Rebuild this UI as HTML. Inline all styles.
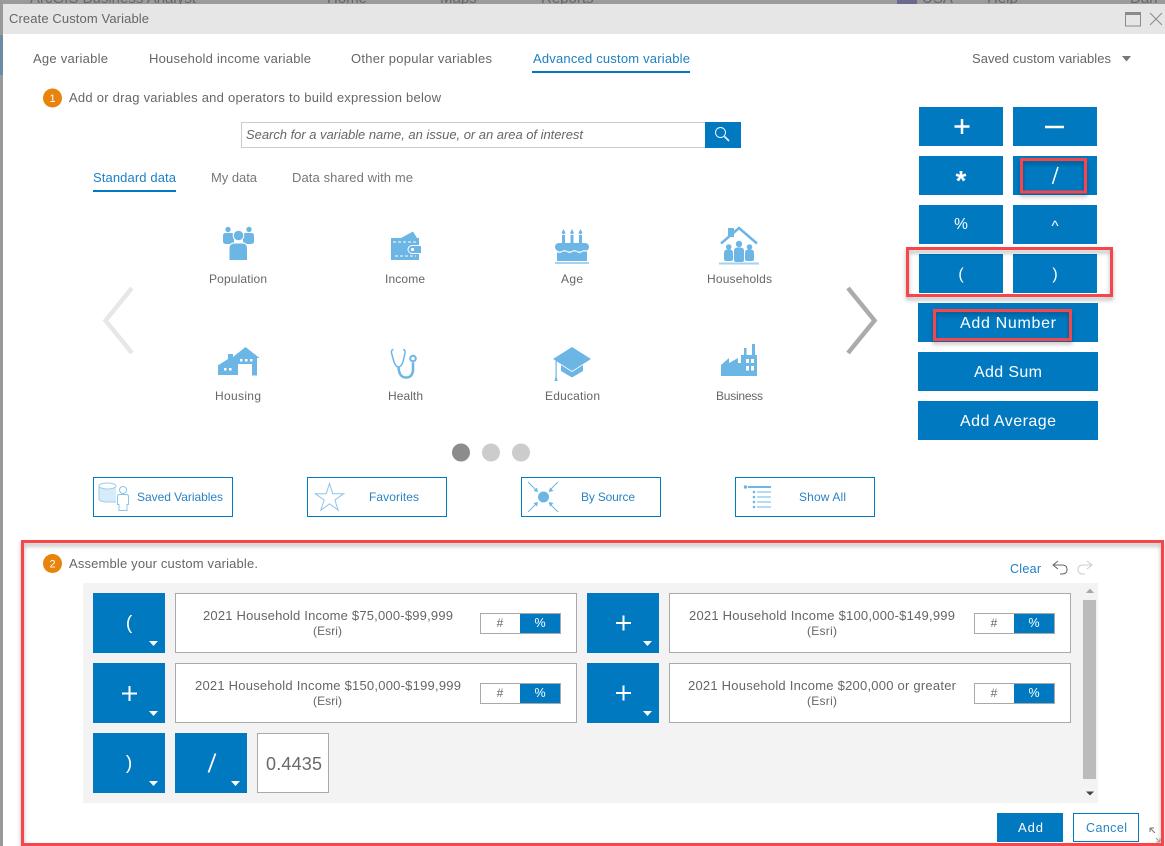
<!DOCTYPE html>
<html lang="en"><head><meta charset="utf-8"><title>Create Custom Variable</title>
<style>
html,body{margin:0;padding:0;width:1165px;height:846px;overflow:hidden;background:#fff}
svg{display:block;position:absolute;left:0;top:0}
text{font-family:"Liberation Sans",sans-serif;font-size:13px;fill:#666}
.b{fill:#0079c1}
.c{text-anchor:middle}
.lb{fill:#6cb6e6}
.red{fill:none;stroke:#f6444c;stroke-width:3}
.v{fill:#fff;stroke:#a9a9a9;stroke-width:1}
</style></head><body>
<svg width="1165" height="846" viewBox="0 0 1165 846" xmlns="http://www.w3.org/2000/svg">
<defs>
<filter id="sh" x="-10%" y="-20%" width="120%" height="150%"><feDropShadow dx="0" dy="3" stdDeviation="2" flood-color="#000" flood-opacity=".3"/></filter>
<g id="tri"><path d="M0 0h9l-4.500 5z" fill="#fff"/></g>
</defs>
<!-- backdrop strip -->
<rect width="1165" height="4" fill="#9b9b9b"/>
<rect y="0" width="3" height="846" fill="#999"/>
<rect y="35" width="3" height="40" fill="#6d8ba3"/>
<text x="30" y="3" style="font-size:15px;fill:#666">ArcGIS Business Analyst</text>
<text x="327" y="3" style="font-size:15px;fill:#666">Home</text>
<text x="440" y="3" style="font-size:15px;fill:#666">Maps</text>
<text x="541" y="3" style="font-size:15px;fill:#666">Reports</text>
<rect x="897" y="0" width="20" height="4" fill="#6c6a8c"/>
<text x="922" y="3" style="font-size:15px;fill:#666">USA</text>
<text x="987" y="3" style="font-size:15px;fill:#666">Help</text>
<text x="1130" y="3" style="font-size:15px;fill:#666">Dan</text>
<!-- title bar -->
<rect x="3" y="4" width="1162" height="30" fill="#e6e6e6"/>
<text x="9" y="23" textLength="140">Create Custom Variable</text>
<rect x="1125.500" y="12.500" width="15" height="13.500" fill="none" stroke="#8a8a8a"/>
<rect x="1125.500" y="12.500" width="15" height="2.500" fill="#8a8a8a"/>
<path d="M1150 13l12 12M1162 13l-12 12" stroke="#8a8a8a" fill="none"/>
<!-- tabs -->
<text x="33" y="63" textLength="75">Age variable</text>
<text x="149" y="63" textLength="162">Household income variable</text>
<text x="351" y="63" textLength="141">Other popular variables</text>
<text x="533" y="63" textLength="157" style="fill:#1c80c4">Advanced custom variable</text>
<rect x="532" y="71" width="158" height="2" class="b"/>
<text x="972" y="63" textLength="139">Saved custom variables</text>
<path d="M1122 56h9l-4.500 5.500z" fill="#777"/>
<!-- step 1 -->
<circle cx="52.500" cy="98" r="9.500" fill="#e8830c"/>
<text x="52.500" y="102" class="c" style="font-size:11px;fill:#fff">1</text>
<text x="69" y="102" textLength="372">Add or drag variables and operators to build expression below</text>
<!-- search -->
<rect x="241.500" y="122.500" width="464" height="25" fill="#fff" stroke="#ccc"/>
<text x="246" y="139" textLength="337" style="font-style:italic">Search for a variable name, an issue, or an area of interest</text>
<rect x="705" y="122" width="36" height="26" class="b"/>
<circle cx="720.500" cy="132.500" r="5" fill="none" stroke="#fff" stroke-width=".9"/>
<path d="M724.500 136.500l4.500 4.500" stroke="#dfeef8" stroke-width="1.800"/>
<!-- sub tabs -->
<text x="93" y="182" textLength="83" style="fill:#1c80c4">Standard data</text>
<rect x="93" y="190" width="83" height="2" class="b"/>
<text x="211" y="182" textLength="46" style="fill:#777">My data</text>
<text x="292" y="182" textLength="121" style="fill:#777">Data shared with me</text>
<!-- category icons -->
<g class="lb">
<!-- population -->
<circle cx="228" cy="229.500" r="2.700"/><circle cx="249" cy="229.500" r="2.700"/>
<rect x="223" y="233" width="11" height="11" rx="2.500"/><rect x="243" y="233" width="11" height="11" rx="2.500"/>
<circle cx="238.500" cy="235.500" r="5.300" stroke="#fff" stroke-width="1"/>
<path d="M229 260.500v-12q0-5.500 5.500-5.500h8q5 0 5 5.500v12z" stroke="#fff" stroke-width="1"/>
<!-- income -->
<path d="M401 238l12-6.500 4 6.500z"/>
<path d="M391 238h28v7h-7a4.500 4.500 0 0 0 0 9h7v6h-28z"/>
<path d="M412 246h9v7h-9a3.500 3.500 0 0 1 0-7z"/>
<circle cx="412.500" cy="249.500" r="1.600" fill="#fff"/>
<path d="M393 242h24M395 256h21" stroke="#fff" stroke-width="1" stroke-dasharray="3 2"/>
<!-- housing -->
<path d="M217 366l11-7v-5h5v3l12.500-10 14 11h-2.500v17.500h-5V364h-14v11h-20v-9h-1z"/>
<g fill="#fff"><rect x="240" y="359" width="2.500" height="2.500"/><rect x="245" y="359" width="2.500" height="2.500"/><rect x="250" y="359" width="2.500" height="2.500"/><rect x="224" y="368" width="2.500" height="2.500"/><rect x="229" y="368" width="2.500" height="2.500"/></g>
<!-- age -->
<rect x="555" y="243" width="34" height="8" rx="4"/>
<path d="M557 251.500h30V261h-30z"/>
<path d="M557 251.500q2.500 2.500 5 0t5 0 5 0 5 0 5 0 5 0" fill="none" stroke="#fff" stroke-width=".8"/>
<rect x="555" y="262" width="34" height="2" fill="#a5d2f0"/>
<rect x="562" y="235" width="3" height="8"/><rect x="570.500" y="235" width="3" height="8"/><rect x="579" y="235" width="3" height="8"/>
<path d="M563.500 229l2 4-2 1.500-2-1.500zM572 229l2 4-2 1.500-2-1.500zM580.500 229l2 4-2 1.500-2-1.500z"/>
<!-- households -->
<rect x="728" y="228" width="6" height="9"/>
<path d="M721 243.500l18-15.500 18 15.500" fill="none" stroke="#6cb6e6" stroke-width="2.500"/>
<circle cx="739" cy="244" r="3.200"/><circle cx="728.700" cy="247" r="2.800"/><circle cx="749.500" cy="247" r="2.800"/>
<path d="M724 259v-6q0-3.500 3.500-3.500h2q3.500 0 3.500 3.500v6q0 2-2 2h-5q-2 0-2-2zM745 259v-6q0-3.500 3.500-3.500h2q3.500 0 3.500 3.500v6q0 2-2 2h-5q-2 0-2-2z"/>
<path d="M734 260v-9q0-3.500 3.500-3.500h3q3.500 0 3.500 3.500v9q0 2-2 2h-6q-2 0-2-2z"/>
<rect x="719" y="262.500" width="40" height="2" fill="#a5d2f0"/>
<!-- education -->
<path d="M572 347l19 12-19 12-19-12z"/>
<path d="M561 365v6l11 6.500 11-6.500v-6l-11 7z"/>
<rect x="555.500" y="361" width="1.200" height="17"/><path d="M555.500 377h1.200l1 4h-3.200z"/>
<!-- business -->
<path d="M721 376v-11l8-7v5l9-5v5h3v-8h3v-7h2.500v7h5.500v-11h3v11h2v21z"/>
<g fill="#fff"><rect x="746" y="359" width="3" height="4"/><rect x="751" y="359" width="3" height="4"/><rect x="746" y="366" width="3" height="4.500"/><rect x="751" y="366" width="3" height="4.500"/></g>
</g>
<!-- health -->
<g fill="none" stroke="#6cb6e6">
<path d="M393.500 349.500q-2.500 0-2 3.500l2.500 9q2 5 4.500 5t4.500-5l2-9q.5-3.500-2-3.500" stroke-width="1.500"/>
<path d="M398.500 367q.5 10 7 10.500t7.500-7v-8" stroke-width="2.500"/>
<circle cx="413" cy="358.500" r="2.800" stroke-width="2"/>
</g>
<text x="209" y="283" textLength="58" style="font-size:12px">Population</text>
<text x="385" y="283" textLength="40" style="font-size:12px">Income</text>
<text x="561" y="283" textLength="22" style="font-size:12px">Age</text>
<text x="707" y="283" textLength="65" style="font-size:12px">Households</text>
<text x="215" y="400" textLength="46" style="font-size:12px">Housing</text>
<text x="388" y="400" textLength="35" style="font-size:12px">Health</text>
<text x="545" y="400" textLength="55" style="font-size:12px">Education</text>
<text x="716" y="400" textLength="47" style="font-size:12px">Business</text>
<!-- carousel -->
<path d="M132 288l-26.500 32.500L132 353" fill="none" stroke="#e7e7e7" stroke-width="4.500"/>
<path d="M848 288l26.500 32.500L848 353" fill="none" stroke="#ababab" stroke-width="4.500"/>
<circle cx="461" cy="452.500" r="9" fill="#8c8c8c"/><circle cx="491" cy="452.500" r="9" fill="#ccc"/><circle cx="521" cy="452.500" r="9" fill="#ccc"/>
<!-- bottom filter buttons -->
<g fill="#fff" stroke="#0079c1"><rect x="93.500" y="477.500" width="139" height="39"/><rect x="307.500" y="477.500" width="139" height="39"/><rect x="521.500" y="477.500" width="139" height="39"/><rect x="735.500" y="477.500" width="139" height="39"/></g>
<text x="137" y="501" textLength="86" style="font-size:12px;fill:#2b83c4">Saved Variables</text>
<text x="369" y="501" textLength="50" style="font-size:12px;fill:#2b83c4">Favorites</text>
<text x="581" y="501" textLength="54" style="font-size:12px;fill:#2b83c4">By Source</text>
<text x="799" y="501" textLength="47" style="font-size:12px;fill:#2b83c4">Show All</text>
<path d="M99 486v13q0 2.500 8 2.500h9V486z" fill="#d8ebf8"/>
<ellipse cx="107.500" cy="486" rx="8.500" ry="3" fill="#fff" stroke="#9ccdec"/>
<path d="M99 486v13q0 3 9 3h8" fill="none" stroke="#9ccdec"/>
<circle cx="123" cy="490" r="3.500" fill="#fff" stroke="#8cc5ea"/>
<path d="M117.500 504.500v-8q0-2 2-2h7q2 0 2 2v8h-1.500v6h-8v-6z" fill="#fff" stroke="#8cc5ea"/>
<path d="M329.500 483.500l3.300 10.200h10.900l-8.800 6.300 3.300 10.200-8.700-6.300-8.700 6.300 3.300-10.200-8.800-6.300h10.900z" fill="none" stroke="#8cc5ea"/>
<circle cx="543.500" cy="497" r="5.500" class="lb"/>
<g stroke="#6cb6e6" fill="#6cb6e6"><path d="M528 482l9 9M558 482l-9 9M528 512l9-9M558 512l-9-9" fill="none"/>
<path d="M538 492l-4.500-1 3.500-3.500zM549 492l4.500-1-3.500-3.500zM538 502l-4.500 1 3.500 3.500zM549 502l4.500 1-3.500 3.500z" stroke="none"/></g>
<circle cx="745.500" cy="487" r="1.700" class="lb"/><rect x="748" y="486" width="23" height="2" class="lb"/>
<g class="lb"><circle cx="754" cy="492" r="1.300"/><circle cx="754" cy="497" r="1.300"/><circle cx="754" cy="502" r="1.300"/><circle cx="754" cy="507" r="1.300"/>
<rect x="757" y="491.500" width="14" height="1"/><rect x="757" y="496.500" width="14" height="1"/><rect x="757" y="501.500" width="14" height="1"/><rect x="757" y="506.500" width="14" height="1"/></g>
<!-- calculator -->
<g class="b">
<rect x="919" y="107" width="84" height="39"/><rect x="1013" y="107" width="84" height="39"/>
<rect x="919" y="156" width="84" height="39"/><rect x="1013" y="156" width="84" height="39"/>
<rect x="919" y="205" width="84" height="39"/><rect x="1013" y="205" width="84" height="39"/>
<rect x="919" y="254" width="84" height="39"/><rect x="1013" y="254" width="84" height="39"/>
<rect x="918" y="303" width="180" height="39"/><rect x="918" y="352" width="180" height="39"/><rect x="918" y="401" width="180" height="39"/>
</g>
<path d="M962 119v15M954.500 126.500h15M1045 127h19" stroke="#fff" stroke-width="2.500" fill="none"/>
<text x="961" y="190" class="c" style="font-size:28px;font-weight:bold;fill:#fff">*</text>
<path d="M1058 167l-5.500 17" stroke="#fff" stroke-width="1.500"/>
<text x="961" y="229" class="c" style="font-size:15.500px;fill:#fff">%</text>
<text x="1055" y="231" class="c" style="font-size:15px;fill:#fff">^</text>
<text x="961" y="279" class="c" style="font-size:16px;fill:#fff">(</text>
<text x="1055" y="279" class="c" style="font-size:16px;fill:#fff">)</text>
<text x="960" y="328" textLength="96" style="font-size:16px;fill:#fff">Add Number</text>
<text x="974" y="377" textLength="68" style="font-size:16px;fill:#fff">Add Sum</text>
<text x="960" y="426" textLength="96" style="font-size:16px;fill:#fff">Add Average</text>
<!-- red annotations -->
<rect x="1021.500" y="159.500" width="64" height="32.500" class="red" filter="url(#sh)"/>
<rect x="907.500" y="248.500" width="204" height="47" class="red" filter="url(#sh)"/>
<rect x="934.500" y="310.500" width="136" height="29" class="red" filter="url(#sh)"/>
<!-- step 2 -->
<rect x="22.500" y="541.500" width="1140" height="303" class="red" filter="url(#sh)"/>
<circle cx="52.500" cy="563.500" r="9.500" fill="#e8830c"/>
<text x="52.500" y="567.500" class="c" style="font-size:11px;fill:#fff">2</text>
<text x="69" y="568" textLength="189">Assemble your custom variable.</text>
<text x="1010" y="573" textLength="31" style="font-size:12.500px;fill:#1c80c4">Clear</text>
<path d="M1058 561l-5 4 5 4M1053 565h9q5 0 5 4.500t-5 4.500h-2" fill="none" stroke="#666" stroke-width="1"/>
<path d="M1087 561l5 4-5 4M1092 565h-9q-5 0-5 4.500t5 4.500h2" fill="none" stroke="#ccc" stroke-width="1"/>
<!-- expression panel -->
<rect x="83" y="583" width="1015" height="220" fill="#f3f3f3"/>
<rect x="1083" y="600" width="13" height="179" fill="#bbb"/>
<path d="M1086 593l4-4.500 4 4.500z" fill="#a8a8a8"/><path d="M1086 791.500h8l-4 4z" fill="#444"/>
<g class="b">
<rect x="93" y="593" width="72" height="60"/><rect x="587" y="593" width="72" height="60"/>
<rect x="93" y="663" width="72" height="60"/><rect x="587" y="663" width="72" height="60"/>
<rect x="93" y="733" width="72" height="60"/><rect x="175" y="733" width="72" height="60"/>
</g>
<use href="#tri" x="149" y="641"/><use href="#tri" x="643" y="641"/><use href="#tri" x="149" y="711"/><use href="#tri" x="643" y="711"/><use href="#tri" x="149" y="781"/><use href="#tri" x="231" y="781"/>
<text x="129" y="629" class="c" style="font-size:19px;fill:#fff">(</text>
<text x="129" y="769" class="c" style="font-size:19px;fill:#fff">)</text>
<path d="M129.500 686v15M122 693.500h15M623.500 615.500v15M616 623h15M623.500 685.500v15M616 693h15" stroke="#fff" stroke-width="2" fill="none"/>
<path d="M215.500 753.500l-7 19" stroke="#fff" stroke-width="1.800"/>
<rect x="175.500" y="593.500" width="401" height="59" class="v"/><rect x="669.500" y="593.500" width="401" height="59" class="v"/>
<rect x="175.500" y="663.500" width="401" height="59" class="v"/><rect x="669.500" y="663.500" width="401" height="59" class="v"/>
<rect x="257.500" y="733.500" width="71" height="59" class="v"/>
<text x="203" y="620" textLength="250">2021 Household Income $75,000-$99,999</text><text x="313" y="635" textLength="29" style="font-size:12px">(Esri)</text>
<text x="689" y="620" textLength="266">2021 Household Income $100,000-$149,999</text><text x="807" y="635" textLength="30" style="font-size:12px">(Esri)</text>
<text x="195" y="690" textLength="266">2021 Household Income $150,000-$199,999</text><text x="313" y="705" textLength="29" style="font-size:12px">(Esri)</text>
<text x="688" y="690" textLength="268">2021 Household Income $200,000 or greater</text><text x="807" y="705" textLength="30" style="font-size:12px">(Esri)</text>
<text x="266" y="770" textLength="56" style="font-size:18px;fill:#6a6a6a">0.4435</text>
<!-- toggles -->
<rect x="480.500" y="613.500" width="80" height="20" class="v"/><rect x="520" y="614" width="40" height="19" class="b"/>
<rect x="974.500" y="613.500" width="80" height="20" class="v"/><rect x="1014" y="614" width="40" height="19" class="b"/>
<rect x="480.500" y="683.500" width="80" height="20" class="v"/><rect x="520" y="684" width="40" height="19" class="b"/>
<rect x="974.500" y="683.500" width="80" height="20" class="v"/><rect x="1014" y="684" width="40" height="19" class="b"/>
<text x="500" y="627" class="c" style="font-size:12px">#</text><text x="540" y="627" class="c" style="font-size:12.500px;fill:#fff">%</text>
<text x="994" y="627" class="c" style="font-size:12px">#</text><text x="1034" y="627" class="c" style="font-size:12.500px;fill:#fff">%</text>
<text x="500" y="697" class="c" style="font-size:12px">#</text><text x="540" y="697" class="c" style="font-size:12.500px;fill:#fff">%</text>
<text x="994" y="697" class="c" style="font-size:12px">#</text><text x="1034" y="697" class="c" style="font-size:12.500px;fill:#fff">%</text>
<!-- footer -->
<rect x="997" y="813" width="66" height="29" class="b"/>
<text x="1018" y="832" textLength="25" style="font-size:13px;fill:#fff">Add</text>
<rect x="1073.500" y="813.500" width="65" height="28" fill="#fff" stroke="#0079c1"/>
<text x="1086" y="832" textLength="41" style="font-size:12.500px;fill:#2b83c4">Cancel</text>
<path d="M1150 828h4M1150 828v4M1150 828l5 5" stroke="#777" fill="none"/>
<path d="M1160 842h-4M1160 842v-4M1160 842l-4-4" stroke="#999" fill="none"/>
</svg>
</body></html>
